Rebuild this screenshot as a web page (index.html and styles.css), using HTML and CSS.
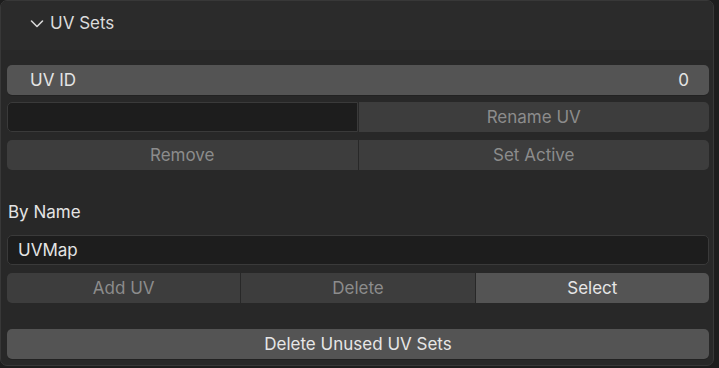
FILE: index.html
```html
<!DOCTYPE html>
<html lang="en">
<head>
  <meta charset="UTF-8" />
  <title>UV Sets</title>
  <link rel="stylesheet" href="styles.css">
</head>
<body>
<div class="panel">
  <div class="panel-header">
    <svg class="chevron" width="14" height="10" viewBox="0 0 14 10">
      <path d="M1.5 2 L7 7.5 L12.5 2" fill="none" stroke="#d8d8d8" stroke-width="1.6" stroke-linecap="round" stroke-linejoin="round"/>
    </svg>
    <span class="panel-title">UV Sets</span>
  </div>
  <div class="panel-body">
    <div class="field num-field row-uvid">
      <span>UV ID</span>
      <span>0</span>
    </div>
    <div class="split row-rename">
      <div class="text-field"></div>
      <div class="btn disabled">Rename UV</div>
    </div>
    <div class="split row-remove">
      <div class="btn disabled">Remove</div>
      <div class="btn disabled">Set Active</div>
    </div>
    <div class="label">By Name</div>
    <div class="text-field name-field">UVMap</div>
    <div class="split three row-actions">
      <div class="btn disabled">Add UV</div>
      <div class="btn disabled">Delete</div>
      <div class="btn active">Select</div>
    </div>
    <div class="btn active wide">Delete Unused UV Sets</div>
  </div>
</div>
</body>
</html>
```

FILE: styles.css
```css
* {
  margin: 0;
  padding: 0;
  box-sizing: border-box;
}
html, body {
  width: 719px;
  height: 368px;
  overflow: hidden;
  background: #1d1d1d;
  font-family: 'Inter', 'Noto Sans', sans-serif;
  font-size: 17px;
  color: #e4e4e4;
}
.panel {
  width: 714px;
  height: 366px;
  background: #282828;
  border: 1px solid #383838;
  border-radius: 7px;
  overflow: hidden;
}
.panel-header {
  height: 49px;
  background: #2b2b2b;
  display: flex;
  align-items: center;
  padding-left: 29px;
  padding-bottom: 5px;
}
.chevron {
  margin-right: 6px;
  margin-top: 1px;
}
.panel-title {
  color: #dcdcdc;
}
.panel-body {
  padding: 15px 4px 0 6px;
  display: flex;
  flex-direction: column;
}
.field, .btn, .text-field {
  height: 30px;
  border-radius: 5px;
  display: flex;
  align-items: center;
}
.num-field {
  background: #545454;
  justify-content: space-between;
  padding: 0 20px 0 23px;
  box-shadow: 0 1px 0 #222;
}
.split {
  display: grid;
  grid-template-columns: 1fr 1fr;
  gap: 1px;
}
.split.three {
  grid-template-columns: 1fr 1fr 1fr;
}
.split > * {
  border-radius: 0;
}
.split > :first-child {
  border-radius: 5px 0 0 5px;
}
.split > :last-child {
  border-radius: 0 5px 5px 0;
}
.row-rename {
  margin-top: 7px;
}
.row-remove {
  margin-top: 8px;
}
.text-field {
  background: #1d1d1d;
  border: 1px solid #3a3a3a;
  padding-left: 10px;
}
.btn {
  justify-content: center;
  background: #3d3d3d;
}
.btn.disabled {
  color: #8c8c8c;
}
.btn.active {
  background: #545454;
  color: #e6e6e6;
}
.label {
  margin-top: 29px;
  height: 26px;
  display: flex;
  align-items: center;
  padding-left: 1px;
}
.name-field {
  margin-top: 10px;
  color: #e4e4e4;
}
.row-actions {
  margin-top: 8px;
}
.wide {
  margin-top: 26px;
  box-shadow: 0 1px 0 #222;
}
```
